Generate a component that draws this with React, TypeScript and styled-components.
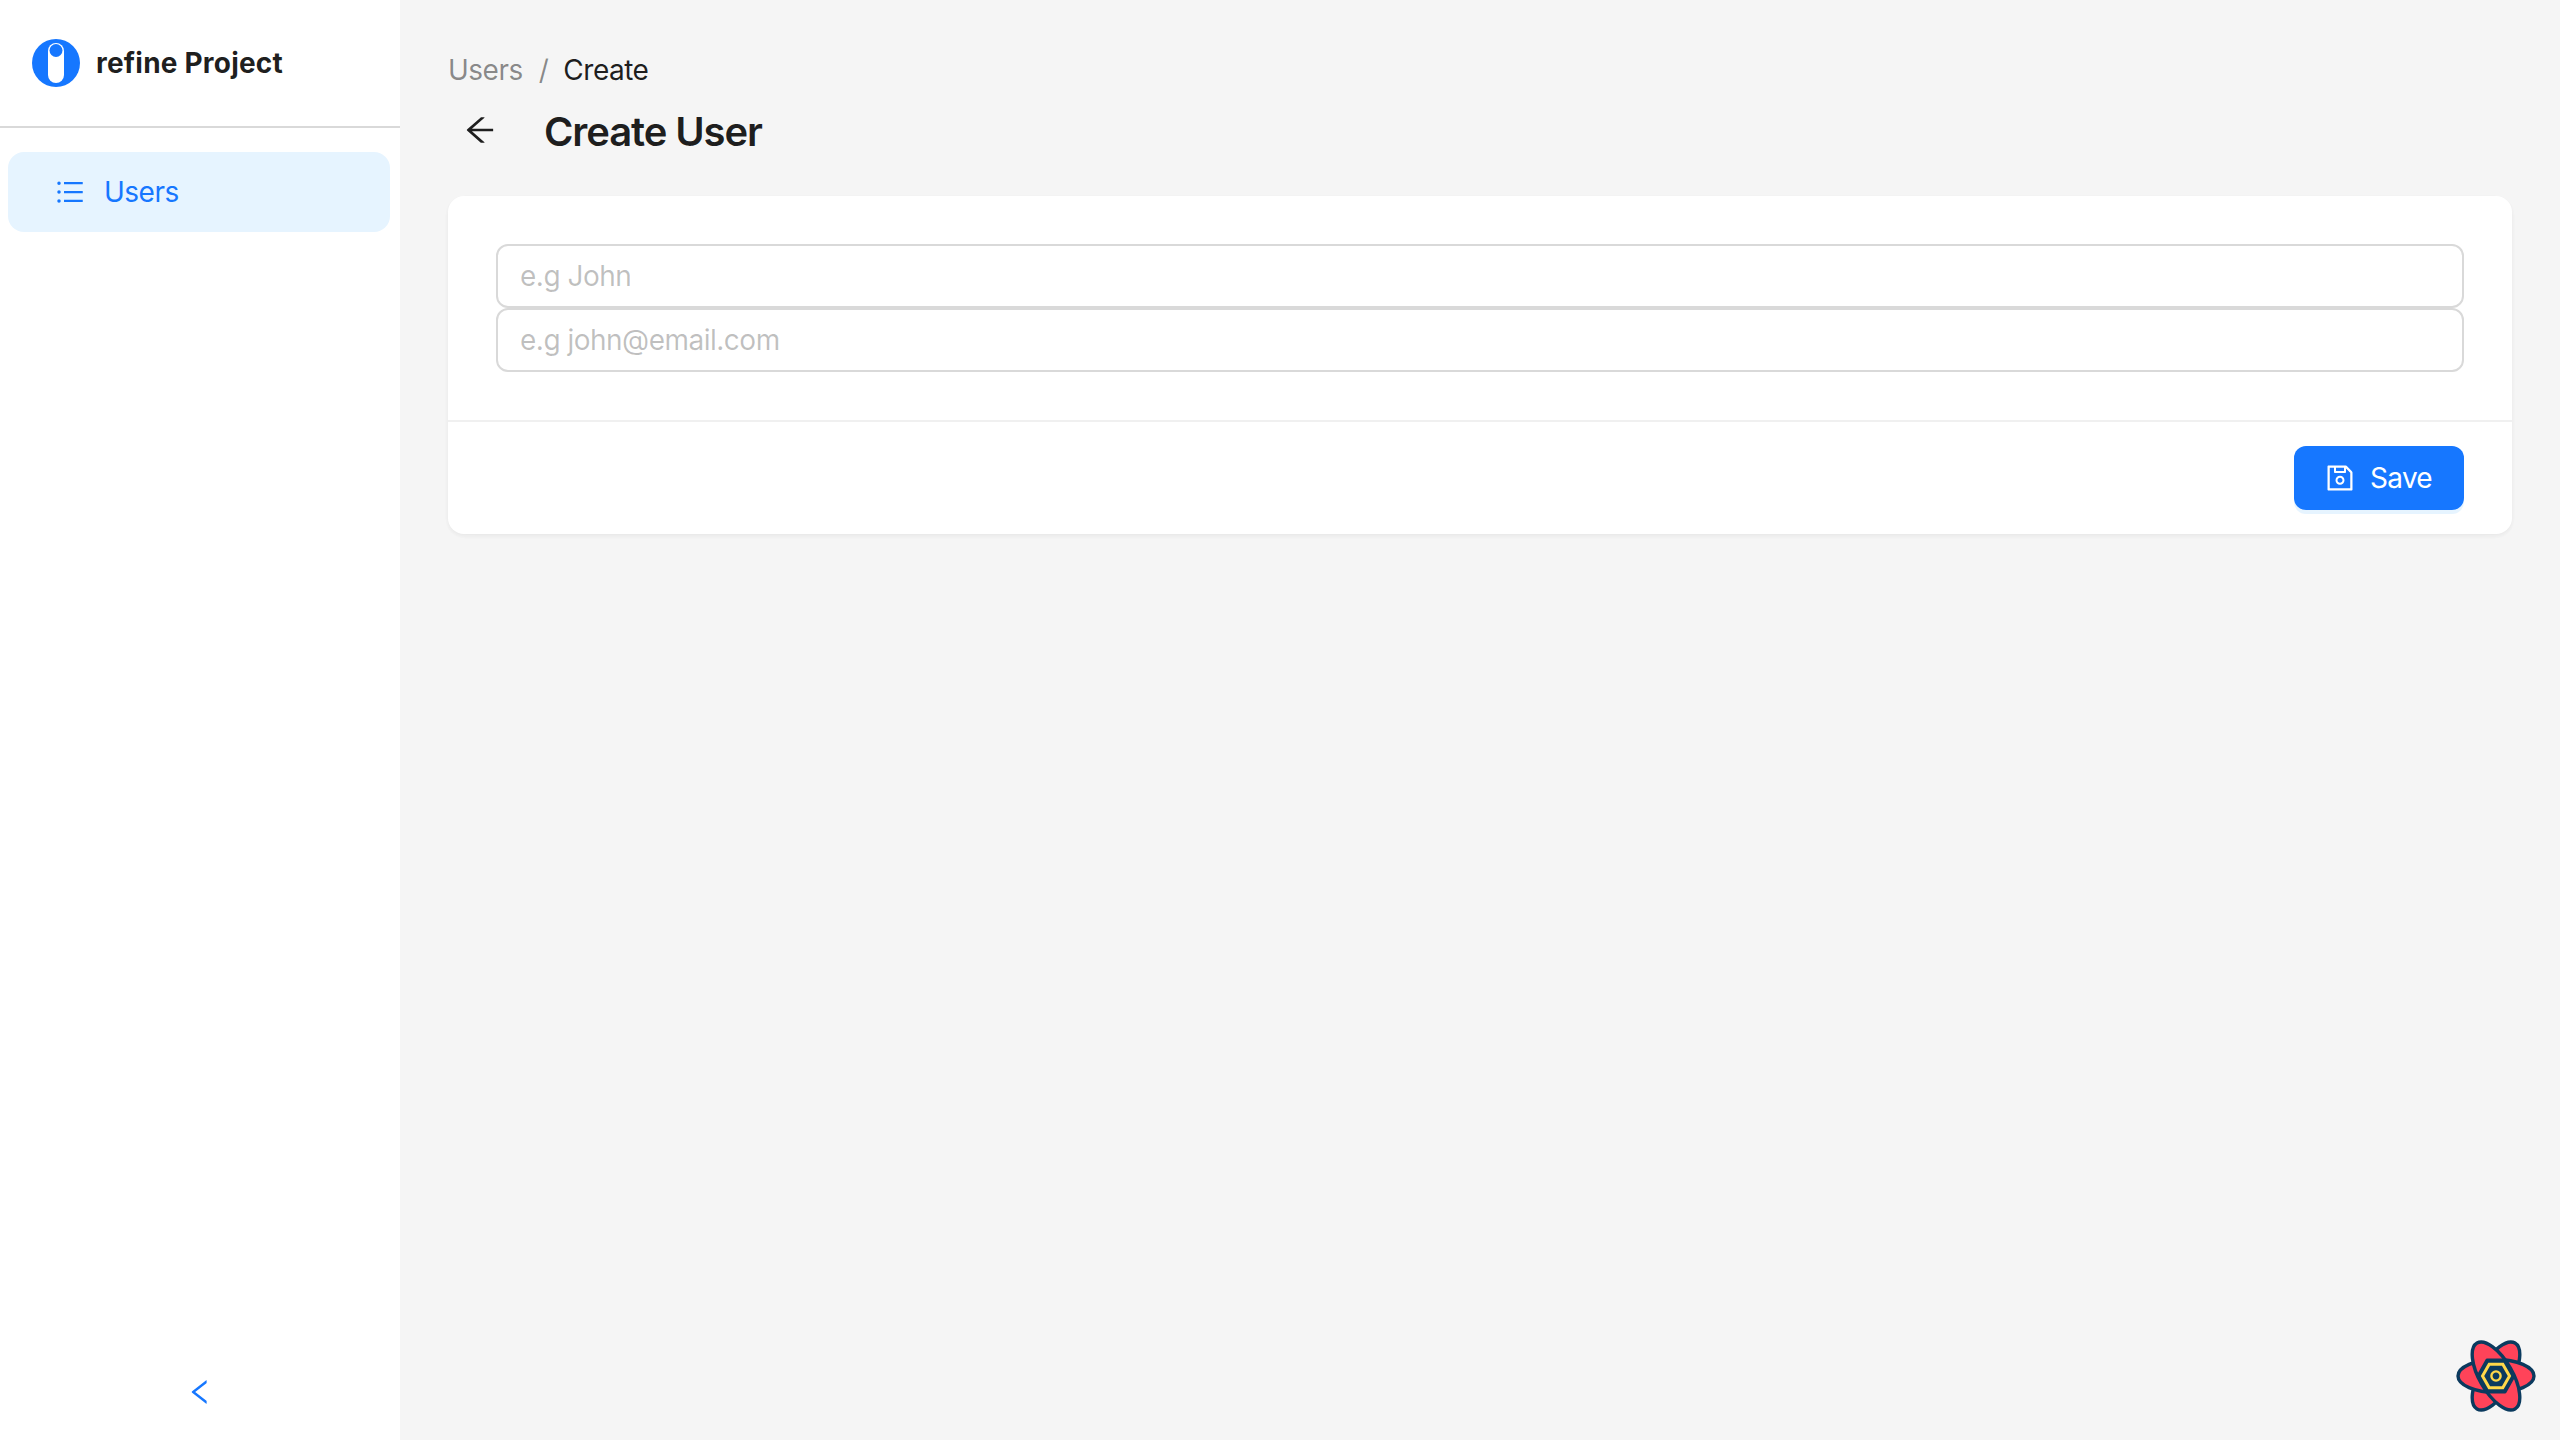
import React from "react";
import styled, { createGlobalStyle } from "styled-components";

const Global = createGlobalStyle`
  html, body { margin: 0; padding: 0; }
  body { font-family: Inter, "Liberation Sans", sans-serif; background: #f5f5f5; }
  * { box-sizing: border-box; }
`;

const Shell = styled.div`
  display: flex;
  min-height: 100vh;
  background: #f5f5f5;
  position: relative;
`;
const Sidebar = styled.aside`
  width: 400px;
  flex: none;
  background: #fff;
  display: flex;
  flex-direction: column;
`;
const Brand = styled.div`
  height: 128px;
  border-bottom: 2px solid #d9d9d9;
  display: flex;
  align-items: center;
  gap: 16px;
  padding: 0 0 0 32px;
`;
const BrandName = styled.span`
  font-size: 28px;
  font-weight: 700;
  letter-spacing: 0.2px;
  color: rgba(0, 0, 0, 0.88);
  line-height: 44px;
`;
const Nav = styled.nav`
  flex: 1;
  padding: 24px 10px 0 8px;
`;
const NavItem = styled.a`
  height: 80px;
  border-radius: 16px;
  background: #e6f4ff;
  color: #1677ff;
  font-size: 28px;
  letter-spacing: -0.5px;
  display: flex;
  align-items: center;
  gap: 20px;
  padding-left: 48px;
`;
const Collapse = styled.div`
  height: 96px;
  display: flex;
  align-items: center;
  justify-content: center;
  color: #1677ff;
`;
const Main = styled.main`
  flex: 1;
  padding: 48px;
  min-width: 0;
`;
const Crumbs = styled.div`
  display: flex;
  font-size: 28px;
  letter-spacing: -0.5px;
  line-height: 44px;
  color: rgba(0, 0, 0, 0.45);
`;
const CrumbSep = styled.span`
  margin: 0 15px 0 16px;
`;
const CrumbNow = styled.span`
  color: rgba(0, 0, 0, 0.88);
`;
const Heading = styled.div`
  display: flex;
  align-items: center;
  gap: 48px;
  height: 64px;
  margin: 8px 0 32px;
  padding-left: 16px;
`;
const BackBtn = styled.span`
  display: flex;
  color: rgba(0, 0, 0, 0.88);
  position: relative;
  top: -2px;
`;
const Title = styled.h1`
  margin: 0;
  font-size: 40px;
  font-weight: 600;
  letter-spacing: -1.1px;
  line-height: 64px;
  color: rgba(0, 0, 0, 0.88);
`;
const Card = styled.section`
  background: #fff;
  border-radius: 16px;
  box-shadow: 0 2px 4px 0 rgba(0, 0, 0, 0.02), 0 2px 12px -2px rgba(0, 0, 0, 0.02), 0 2px 4px 0 rgba(0, 0, 0, 0.03);
`;
const CardBody = styled.div`
  padding: 48px;
  display: flex;
  flex-direction: column;
`;
const Field = styled.input`
  height: 64px;
  width: 100%;
  border: 2px solid #d9d9d9;
  border-radius: 12px;
  padding: 0 22px;
  font: 400 28px/44px Inter, "Liberation Sans", sans-serif;
  letter-spacing: -0.5px;
  outline: none;
  background: #fff;
  &::placeholder {
    color: rgba(0, 0, 0, 0.25);
    opacity: 1;
  }
`;
const CardFooter = styled.div`
  border-top: 2px solid #f0f0f0;
  padding: 24px 48px;
  display: flex;
  justify-content: flex-end;
`;
const SaveBtn = styled.button`
  height: 64px;
  padding: 0 32px;
  border: 0;
  border-radius: 12px;
  background: #1677ff;
  color: #fff;
  font: 400 28px/44px Inter, "Liberation Sans", sans-serif;
  letter-spacing: -0.7px;
  display: flex;
  align-items: center;
  gap: 16px;
  box-shadow: 0 4px 0 rgba(5, 145, 255, 0.1);
`;
const Devtools = styled.svg`
  position: absolute;
  right: 22px;
  bottom: 26px;
`;

const Ant = ({ d, size }: { d: string; size: number }) => (
  <svg width={size} height={size} viewBox="64 64 896 896" fill="currentColor" aria-hidden>
    <path d={d} />
  </svg>
);

const SAVE = "M893.3 293.3L730.7 130.7c-7.5-7.5-16.7-13-26.7-16V112H144c-17.7 0-32 14.3-32 32v736c0 17.7 14.3 32 32 32h736c17.7 0 32-14.3 32-32V338.5c0-17-6.7-33.2-18.7-45.2zM384 184h256v104H384V184zm456 656H184V184h136v136c0 17.7 14.3 32 32 32h320c17.7 0 32-14.3 32-32V205.8l136 136V840zM512 442c-79.5 0-144 64.5-144 144s64.5 144 144 144 144-64.5 144-144-64.5-144-144-144zm0 224c-44.2 0-80-35.8-80-80s35.8-80 80-80 80 35.8 80 80-35.8 80-80 80z";
const LIST = "M912 192H328c-4.4 0-8 3.6-8 8v56c0 4.4 3.6 8 8 8h584c4.4 0 8-3.6 8-8v-56c0-4.4-3.6-8-8-8zm0 284H328c-4.4 0-8 3.6-8 8v56c0 4.4 3.6 8 8 8h584c4.4 0 8-3.6 8-8v-56c0-4.4-3.6-8-8-8zm0 284H328c-4.4 0-8 3.6-8 8v56c0 4.4 3.6 8 8 8h584c4.4 0 8-3.6 8-8v-56c0-4.4-3.6-8-8-8zM104 228a56 56 0 10112 0 56 56 0 10-112 0zm0 284a56 56 0 10112 0 56 56 0 10-112 0zm0 284a56 56 0 10112 0 56 56 0 10-112 0z";
const ARROW = "M872 474H286.9l350.2-304c5.6-4.9 2.2-14-5.2-14h-88.5c-3.9 0-7.6 1.4-10.5 3.9L155 487.8a31.96 31.96 0 000 48.3L535.1 866c1.5 1.3 3.3 2 5.2 2h91.5c7.4 0 10.8-9.2 5.2-14L286.9 550H872c4.4 0 8-3.6 8-8v-60c0-4.4-3.6-8-8-8z";
const LEFT = "M724 218.3V141c0-6.7-7.7-10.4-12.9-6.3L260.3 486.8a31.86 31.86 0 000 50.3l450.8 352.1c5.3 4.1 12.9.4 12.9-6.3v-77.3c0-4.9-2.3-9.6-6.1-12.6l-360-281 360-281.1c3.8-3 6.1-7.7 6.1-12.6z";

const Logo = () => (
  <svg width="48" height="48" viewBox="0 0 48 48" aria-hidden>
    <circle cx="24" cy="24" r="24" fill="#1677ff" />
    <rect x="16" y="4" width="16" height="40" rx="8" fill="#fff" />
    <circle cx="24" cy="11.5" r="6.5" fill="#1677ff" />
  </svg>
);

const DevtoolsMark = () => (
  <Devtools width="84" height="76" viewBox="-42 -38 84 76" aria-hidden>
    {[-60, 0, 60].map((a) => (
      <ellipse
        key={a}
        rx="38"
        ry="16.5"
        transform={`rotate(${a})`}
        fill="#ff4359"
        stroke="#0b3a5e"
        strokeWidth="3.4"
      />
    ))}
    <polygon points="-18,0 -9,-16 9,-16 18,0 9,16 -9,16" fill="#0b3a5e" stroke="#0b3a5e" strokeWidth="3" strokeLinejoin="round" />
    <polygon points="-13.5,0 -6.8,-11.8 6.8,-11.8 13.5,0 6.8,11.8 -6.8,11.8" fill="#0b3a5e" stroke="#ffd84a" strokeWidth="3" />
    <circle cx="0" cy="0" r="4.6" fill="none" stroke="#ffd84a" strokeWidth="2.4" />
  </Devtools>
);

export default function App() {
  return (
    <>
      <Global />
      <Shell>
        <Sidebar>
          <Brand>
            <Logo />
            <BrandName>refine Project</BrandName>
          </Brand>
          <Nav>
            <NavItem>
              <Ant d={LIST} size={28} />
              Users
            </NavItem>
          </Nav>
          <Collapse>
            <Ant d={LEFT} size={28} />
          </Collapse>
        </Sidebar>
        <Main>
          <Crumbs>
            <span>Users</span>
            <CrumbSep>/</CrumbSep>
            <CrumbNow>Create</CrumbNow>
          </Crumbs>
          <Heading>
            <BackBtn>
              <Ant d={ARROW} size={32} />
            </BackBtn>
            <Title>Create User</Title>
          </Heading>
          <Card>
            <CardBody>
              <Field placeholder="e.g John" />
              <Field placeholder="e.g john@email.com" />
            </CardBody>
            <CardFooter>
              <SaveBtn>
                <Ant d={SAVE} size={28} />
                Save
              </SaveBtn>
            </CardFooter>
          </Card>
        </Main>
        <DevtoolsMark />
      </Shell>
    </>
  );
}
